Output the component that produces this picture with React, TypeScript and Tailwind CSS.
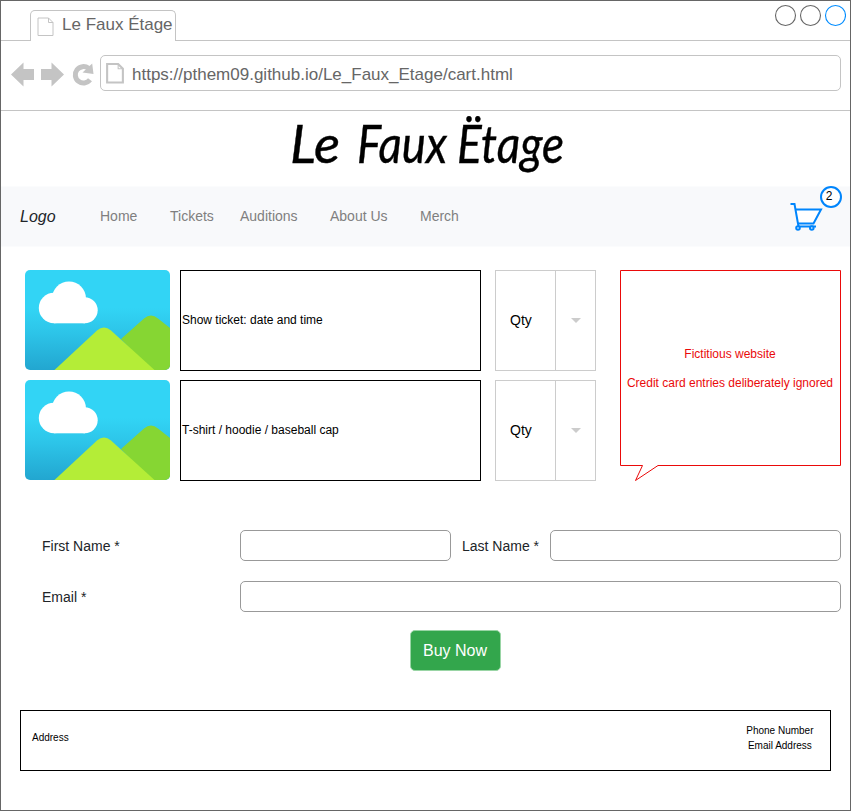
import React from "react";

const navLinks = [
  { label: "Home", width: "w-[70px]" },
  { label: "Tickets", width: "w-[70px]" },
  { label: "Auditions", width: "w-[90px]" },
  { label: "About Us", width: "w-[90px]" },
  { label: "Merch", width: "w-[70px]" },
];

const brandWords = [
  { word: "Le", x: 289, width: 50 },
  { word: "Faux", x: 356, width: 90 },
  { word: "Ëtage", x: 456, width: 107 },
];

function PageIcon({ className, stroke }: { className: string; stroke: number }) {
  return (
    <svg className={className} viewBox="0 0 17 20" fill="none" stroke="#c4c4c4" strokeWidth={stroke}>
      <path d="M1 1H11.5L16 5.5V18.5H1Z" />
      <path d="M11.5 1V5.5H16" strokeWidth="1" />
    </svg>
  );
}

function TitleBar() {
  return (
    <div className="flex h-10 items-end justify-between border-b border-[#c4c4c4] pl-[29px] pr-[4px]">
      <div className="-mb-px flex h-[31px] w-[146px] rounded-t-[5px] border border-b-0 border-[#c4c4c4] bg-white pl-[5.5px]">
        <PageIcon className="mt-[6px] h-[20px] w-[17px] shrink-0" stroke={1} />
        <span className="ml-[8.5px] mt-[4px] whitespace-nowrap text-[17px] leading-5 text-[#666]">Le Faux Étage</span>
      </div>
      <svg className="h-[39px] w-[72px]" viewBox="0 0 72 39" fill="none" strokeWidth="1.1">
        <circle cx="11.5" cy="14.5" r="10" stroke="#666" />
        <circle cx="36.5" cy="14.5" r="10" stroke="#666" />
        <circle cx="61.5" cy="14.5" r="10" stroke="#008cff" />
      </svg>
    </div>
  );
}

function AddressBar() {
  return (
    <div className="flex h-[70px] items-start border-b border-[#c4c4c4] pl-[9px] pt-[14px]">
      <svg className="h-9 w-[90px] shrink-0" viewBox="10 55 90 36">
        <path fill="#c4c4c4" d="M11 74.5L23.5 62.5V69H34V80H23.5V86.5Z" />
        <path fill="#c4c4c4" d="M64 74.5L51.5 62.5V69H41V80H51.5V86.5Z" />
        <path fill="none" stroke="#c4c4c4" strokeWidth="5" d="M88.500 68.300A8.200 8.200 0 1 0 90 79.800" />
        <path fill="#c4c4c4" d="M92.200 63.500L93.500 74L82.500 72.500Z" />
      </svg>
      <div className="flex h-9 w-[741px] rounded-[5px] border border-[#c4c4c4] pl-[5px]">
        <PageIcon className="mt-[7px] h-[21px] w-[18px] shrink-0" stroke={2} />
        <span className="ml-2 mt-[9px] text-[17px] leading-5 text-[#666]">
          https://pthem09.github.io/Le_Faux_Etage/cart.html
        </span>
      </div>
    </div>
  );
}

function Wordmark() {
  return (
    <div className="flex h-[75px] justify-center">
      <svg
        className="h-[75px] w-[280px] overflow-visible fill-black stroke-black stroke-[0.4px] font-['Lato',sans-serif] text-[53px] italic"
        viewBox="285 111 280 75"
      >
        {brandWords.map((b) => (
          <text key={b.word} x={b.x} y="163" textLength={b.width} lengthAdjust="spacingAndGlyphs">
            {b.word}
          </text>
        ))}
      </svg>
    </div>
  );
}

function NavBar() {
  return (
    <nav className="-mx-px flex h-[61px] items-center border-x border-x-[#adaeaf] border-y border-y-[#fbfcfd] bg-[#f8f9fb] pl-[19px] text-sm text-[#7f7f7f]">
      <span className="w-20 text-base italic text-[#212529]">Logo</span>
      {navLinks.map((l) => (
        <a key={l.label} className={`${l.width} pb-[2px]`}>
          {l.label}
        </a>
      ))}
      <div className="relative ml-[298px] h-[59px] w-[55px]">
        <svg className="h-full w-full" viewBox="788 187 55 59" fill="none" stroke="#0085fc" strokeWidth="2">
          <path fill="#fff" stroke="none" d="M795.500 209.500H821L813.500 223.500H798Z" />
          <path d="M790.5 204H794.5L798.5 226.5H816" />
          <path d="M795.5 209.5H821L813.5 223.5H798" />
          <circle cx="798" cy="228" r="1.8" fill="#fff" />
          <circle cx="811.8" cy="228" r="1.8" fill="#fff" />
        </svg>
        <span className="absolute -top-[1.5px] left-[31.5px] flex h-[22px] w-[22px] justify-center rounded-full border-2 border-[#0085fc] bg-white pr-[3px] text-xs leading-[16px] text-black">
          2
        </span>
      </div>
    </nav>
  );
}

function Landscape({ id }: { id: string }) {
  return (
    <svg className="h-[100px] w-[145px] rounded-[5px]" viewBox="0 0 145 100">
      <defs>
        <linearGradient id={id} x1="0" y1="0" x2="0" y2="1">
          <stop offset="0.38" stopColor="#32d4f5" />
          <stop offset="0.62" stopColor="#2dc5e9" />
          <stop offset="1" stopColor="#22a6d0" />
        </linearGradient>
      </defs>
      <rect width="145" height="100" fill={`url(#${id})`} />
      <path fill="#86d633" d="M96 69L119 48.5Q126 42.500 133 48.500L145 58V100H125Z" />
      <path fill="#b4ed37" d="M29.500 100L72 60.500Q79 54.500 86 60.500L129.500 100Z" />
      <g fill="#fff">
        <circle cx="29" cy="38" r="15.200" />
        <circle cx="44" cy="28.500" r="17" />
        <circle cx="59.700" cy="40.300" r="13" />
        <rect x="29" y="32" width="31" height="21.300" />
      </g>
    </svg>
  );
}

function CartRow({ id, text }: { id: string; text: string }) {
  return (
    <div className="flex h-[101px]">
      <Landscape id={id} />
      <div className="ml-[10px] flex w-[301px] items-center border border-black pb-[2px] pl-px text-xs text-black">
        {text}
      </div>
      <div className="ml-[14px] flex w-[101px] border border-[#ccc] text-sm text-black">
        <span className="flex w-[60px] items-center border-r border-[#ccc] pb-[2px] pl-[14px]">Qty</span>
        <span className="flex flex-1 items-center justify-center">
          <span className="h-0 w-0 border-x-[5px] border-t-[5px] border-x-transparent border-t-[#ccc]" />
        </span>
      </div>
    </div>
  );
}

function Notice() {
  return (
    <div className="relative ml-[24px] h-[211px] w-[221px]">
      <svg className="absolute inset-0 h-full w-full" viewBox="0 0 221 211" fill="none" stroke="#ea0a0a">
        <path d="M.5 .5H220.500V195.500H38L15.500 210.500L22.500 195.500H.5Z" />
      </svg>
      <div className="relative flex h-[196px] flex-col items-center justify-center gap-[15px] pr-px text-xs leading-[14px] text-[#ea0a0a]">
        <p>Fictitious website</p>
        <p className="whitespace-nowrap">Credit card entries deliberately ignored</p>
      </div>
    </div>
  );
}

function CheckoutForm() {
  const field = "h-[31px] rounded-[5px] border border-[#999] bg-white outline-none";
  return (
    <form className="mt-[49px] pl-[41px] text-sm text-[#212529]">
      <div className="flex items-center">
        <label className="w-[198px]">First Name *</label>
        <input className={`${field} w-[211px]`} />
        <label className="ml-[11px] w-[88px]">Last Name *</label>
        <input className={`${field} w-[291px]`} />
      </div>
      <div className="mt-5 flex items-center">
        <label className="w-[198px]">Email *</label>
        <input className={`${field} w-[601px]`} />
      </div>
      <button
        type="button"
        className="ml-[368px] mt-[18px] block h-[41px] w-[91px] rounded-[5px] border border-[#99d5a5] bg-[#33a64c] pr-px text-base text-white"
      >
        Buy Now
      </button>
    </form>
  );
}

export default function App() {
  return (
    <div className="h-[811px] w-[851px] overflow-hidden border border-[#666] bg-white font-['Liberation_Sans',Arial,sans-serif]">
      <TitleBar />
      <AddressBar />
      <Wordmark />
      <NavBar />
      <main>
        <div className="flex pl-[24px] pt-[23px]">
          <div className="flex flex-col gap-[9px]">
            <CartRow id="sky-ticket" text="Show ticket: date and time" />
            <CartRow id="sky-shirt" text="T-shirt / hoodie / baseball cap" />
          </div>
          <Notice />
        </div>
        <CheckoutForm />
      </main>
      <footer className="ml-[19px] mt-[39px] flex h-[61px] w-[811px] justify-between border border-black pl-[11px] pr-[16.5px] text-[10px] leading-[15px] text-black">
        <span className="mt-[19px]">Address</span>
        <div className="mt-[12px] text-center">
          <p>Phone Number</p>
          <p>Email Address</p>
        </div>
      </footer>
    </div>
  );
}
